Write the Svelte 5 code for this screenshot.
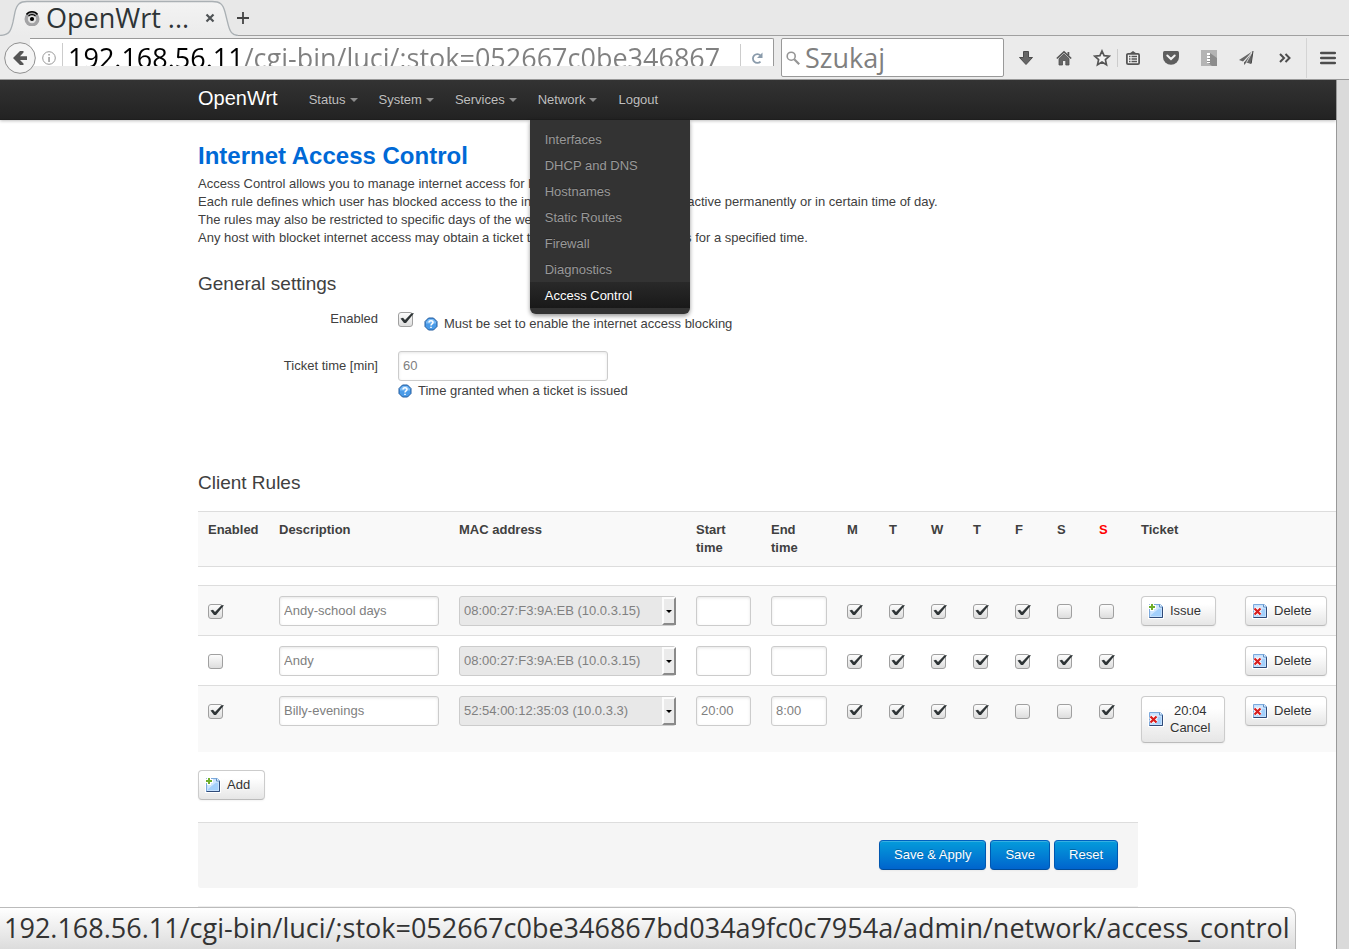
<script>
  const menu = ['Status', 'System', 'Services', 'Network'];
  const networkItems = [
    'Interfaces', 'DHCP and DNS', 'Hostnames', 'Static Routes',
    'Firewall', 'Diagnostics', 'Access Control'
  ];
  const days = [
    { name: 'Monday', short: 'M' },
    { name: 'Tuesday', short: 'T' },
    { name: 'Wednesday', short: 'W' },
    { name: 'Thursday', short: 'T' },
    { name: 'Friday', short: 'F' },
    { name: 'Saturday', short: 'S' },
    { name: 'Sunday', short: 'S' }
  ];
  const hosts = ['08:00:27:F3:9A:EB (10.0.3.15)', '52:54:00:12:35:03 (10.0.3.3)'];

  let rules = $state([
    { on: true, name: 'Andy-school days', mac: hosts[0], start: '', end: '', days: [true, true, true, true, true, false, false], ticket: 'issue' },
    { on: false, name: 'Andy', mac: hosts[0], start: '', end: '', days: [true, true, true, true, true, true, true], ticket: '' },
    { on: true, name: 'Billy-evenings', mac: hosts[1], start: '20:00', end: '8:00', days: [true, true, true, true, false, false, true], ticket: '20:04' }
  ]);
  let enabled = $state(true);
  let ticketTime = $state('60');
</script>

{#snippet pageIcon(kind)}
  <svg class="page-icon" viewBox="0 0 16 16" width="16" height="16" aria-hidden="true">
    <path d="M0 0h13l3 3v13H0z" fill="#fff" />
    <path d="M1.500 1.500H12l2.500 2v11h-13z" fill="#c4e0fd" stroke="#7ba9dc" />
    <path d="M3 3h8v3h2v7H3z" fill="#a3d0fc" />
    <path d="M3 3h8v2.500L3 12z" fill="#cfe6ff" />
    <path d="M14.500 4v10.500h-13" fill="none" stroke="#2f4a78" />
    <path d="M11.500 1.500v2.500h3" fill="#fff" stroke="#5d8ec6" />
    {#if kind === 'add'}
      <path d="M4 0v8M0 4h8" stroke="#fff" stroke-width="4" />
      <path d="M4 1v6M1 4h6" stroke="#6fae2b" stroke-width="2" />
    {:else}
      <path d="M2.500 5.500l6 6M8.500 5.500l-6 6" stroke="#fff" stroke-width="4" />
      <path d="M2.500 5.500l6 6M8.500 5.500l-6 6" stroke="#d81e1e" stroke-width="2.200" />
    {/if}
  </svg>
{/snippet}

{#snippet helpIcon()}
  <svg class="help-icon" viewBox="0 0 14 14" width="14" height="14" aria-hidden="true">
    <path d="M4.500 1h5L13 4.500v5L9.500 13h-5L1 9.500v-5z" fill="#4a9be8" stroke="#235a9c" />
    <path d="M5 2h4l3 3v1.500H2V5z" fill="#7cbcf5" />
    <path d="M5 5.500c0-2.500 4-2.500 4 0 0 1.400-2 1.300-2 3" fill="none" stroke="#fff" stroke-width="1.500" />
    <path d="M6.200 9.700h1.600v1.400H6.200z" fill="#fff" />
  </svg>
{/snippet}

<div class="browser">
  <header class="tabs">
    <div class="tab">
      <svg class="tab-shape" viewBox="0 0 238 36" width="238" height="36" aria-hidden="true">
        <defs>
          <linearGradient id="tabfill" x1="0" y1="0" x2="0" y2="1">
            <stop offset="0" stop-color="#f3f3f3" /><stop offset="1" stop-color="#ebebeb" />
          </linearGradient>
        </defs>
        <path d="M0 36V35.500C10 35 11 30 13 22L15 12C17 4 20 1.500 27 1.500H212C220 1.500 223 4 225 12L228 24C230 32 232 35 238 35.500V36z" fill="url(#tabfill)" />
        <path d="M0 35.500C10 35 11 30 13 22L15 12C17 4 20 1.500 27 1.500H212C220 1.500 223 4 225 12L228 24C230 32 232 35 238 35.500" fill="none" stroke="#aab0b4" stroke-width="1.300" />
      </svg>
      <svg class="favicon" viewBox="0 0 16 16" width="16" height="16" aria-hidden="true">
        <circle cx="8" cy="9" r="7.500" fill="#a3a3a5" />
        <circle cx="8" cy="9" r="4.200" fill="#e4e4e4" />
        <circle cx="8" cy="9" r="2.100" fill="#000" />
        <path d="M2.500 4.500C5 .8 11 .8 13.500 4.500" fill="none" stroke="#000" stroke-width="1.500" />
        <path d="M4.500 6.200C6 4 10 4 11.500 6.200" fill="none" stroke="#000" stroke-width="1.200" />
      </svg>
      <span class="tab-title">OpenWrt ...</span>
      <button class="plain tab-close" aria-label="Close tab">
        <svg viewBox="0 0 10 10" width="10" height="10"><path d="M1.500 1.500l7 7M8.500 1.500l-7 7" stroke="#4f5356" stroke-width="2.200" /></svg>
      </button>
    </div>
    <button class="plain new-tab" aria-label="New tab">
      <svg viewBox="0 0 14 14" width="14" height="14"><path d="M7 1v12M1 7h12" stroke="#444" stroke-width="1.800" /></svg>
    </button>
  </header>

  <div class="toolbar">
    <button class="plain back" aria-label="Back">
      <svg viewBox="0 0 32 32" width="32" height="32">
        <circle cx="16" cy="16" r="15.300" fill="#f4f4f4" stroke="#8f8f8f" />
        <path d="M9 16l7-7h3.500v1.500L16 14.300h7v3.600h-7l3.500 3.700V23H16z" fill="#555" />
      </svg>
    </button>
    <div class="url">
      <svg class="info" viewBox="0 0 14 14" width="14" height="14" aria-hidden="true">
        <circle cx="7" cy="7" r="6.300" fill="none" stroke="#999" />
        <path d="M6.300 3h1.500v1.500H6.300zM6.300 6h1.500v5H6.300z" fill="#999" />
      </svg>
      <input class="url-text" aria-label="Address" value="192.168.56.11/cgi-bin/luci/;stok=052667c0be346867" />
      <button class="plain reload" aria-label="Reload">
        <svg viewBox="0 0 12 12" width="12" height="12">
          <path d="M9.500 3.500A4.400 4.400 0 1 0 9.500 9.600" fill="none" stroke="#8a9bab" stroke-width="1.800" />
          <path d="M11.500.5v5.500H6z" fill="#8a9bab" />
        </svg>
      </button>
    </div>
    <div class="search">
      <svg viewBox="0 0 14 14" width="14" height="14" aria-hidden="true">
        <circle cx="5.200" cy="5.200" r="4" fill="none" stroke="#959595" stroke-width="1.600" />
        <path d="M8.200 8.200l5 5" stroke="#959595" stroke-width="2.200" />
      </svg>
      <input class="search-text" aria-label="Search" placeholder="Szukaj" />
    </div>
    <div class="tools">
      <button class="plain" aria-label="Downloads">
        <svg viewBox="0 0 16 16" width="16" height="16"><path d="M5.500 1.500h5v6h4L8 14.500 1.500 7.500h4z" fill="#666" stroke="#4c4c4c" /></svg>
      </button>
      <button class="plain" aria-label="Home">
        <svg viewBox="0 0 16 16" width="16" height="16">
          <path d="M.8 8.500L8 1.800l7.200 6.700" fill="none" stroke="#555" stroke-width="1.600" />
          <path d="M11.500 2h1.800v3.500h-1.800z" fill="#555" />
          <path d="M3 8.600l5-4.500 5 4.500V15H9.800v-4.500H6.500V15H3z" fill="#666" stroke="#4f4f4f" stroke-width=".8" />
        </svg>
      </button>
      <div class="bookmark">
        <button class="plain" aria-label="Bookmark this page">
          <svg viewBox="0 0 18 18" width="18" height="18"><path d="M9 2l2.100 4.700 5.200.5-3.900 3.400 1.100 5.100L9 13.100l-4.500 2.600 1.100-5.100-3.900-3.400 5.200-.5z" fill="#f2f2f2" stroke="#555" stroke-width="1.700" /></svg>
        </button>
        <button class="plain" aria-label="Bookmarks list">
          <svg viewBox="0 0 16 16" width="16" height="16">
            <path d="M4.500 3.500L8 1l3.500 2.500z" fill="#555" />
            <rect x="1.900" y="3.900" width="12.200" height="10.200" rx="1.200" fill="#f4f4f4" stroke="#555" stroke-width="1.800" />
            <path d="M4 6.500h1.500M4 9h1.500M4 11.500h1.500M6.500 6.500H12M6.500 9H12M6.500 11.500H12" stroke="#555" stroke-width="1.300" />
          </svg>
        </button>
      </div>
      <button class="plain" aria-label="Pocket">
        <svg viewBox="0 0 16 16" width="16" height="16">
          <path d="M1.500 1h13q1.500 0 1.500 1.500V7A8 7.800 0 0 1 0 7V2.500Q0 1 1.500 1z" fill="#5e5e5e" />
          <path d="M4.300 5.500L8 9l3.700-3.500" fill="none" stroke="#f2f2f2" stroke-width="2" stroke-linecap="round" />
        </svg>
      </button>
      <button class="plain" aria-label="Archive add-on">
        <svg viewBox="0 0 16 16" width="16" height="16">
          <path d="M0 0h16v16H0z" fill="#b4b4b4" />
          <path d="M9 3l7 5v8h-5L6 12z" fill="#8c8c8c" />
          <path d="M7.500 3v10" stroke="#fff" stroke-width="3" stroke-dasharray="2 1" />
        </svg>
      </button>
      <button class="plain send" aria-label="Send">
        <svg viewBox="0 0 16 16" width="16" height="16">
          <path d="M14 1L0 10l4 1.500z" fill="#666" />
          <path d="M14 1L5 12v3l2.500-2.500L12 14z" fill="#666" />
          <path d="M13.500 1.500L5 12M13.500 1.500L7.500 12.500" stroke="#eee" stroke-width=".8" />
          <path d="M14 1l-1.800 12.500" stroke="#444" />
        </svg>
      </button>
      <button class="plain" aria-label="More tools">
        <svg viewBox="0 0 16 16" width="16" height="16"><path d="M3 4l4 4-4 4M8.500 4l4 4-4 4" fill="none" stroke="#4d4d4d" stroke-width="2" /></svg>
      </button>
      <div class="main-menu">
        <button class="plain" aria-label="Menu">
          <svg viewBox="0 0 16 16" width="16" height="16"><path d="M1.200 3h13.600M1.200 8h13.600M1.200 13h13.600" stroke="#4d4d4d" stroke-width="2.600" stroke-linecap="round" /></svg>
        </button>
      </div>
    </div>
  </div>

  <div class="viewport">
    <div class="document">
      <nav class="topbar">
        <div class="container nav">
          <a class="brand" href="#home">OpenWrt</a>
          <ul class="menu">
            {#each menu as item}
              <li>
                <a href="#{item}">{item}<span class="caret"></span></a>
                {#if item === 'Network'}
                  <ul class="dropdown">
                    {#each networkItems as sub}
                      <li><a href="#{sub}" class:active={sub === 'Access Control'}>{sub}</a></li>
                    {/each}
                  </ul>
                {/if}
              </li>
            {/each}
            <li><a href="#logout">Logout</a></li>
          </ul>
        </div>
      </nav>

      <main class="container">
        <h1>Internet Access Control</h1>
        <p>
          Access Control allows you to manage internet access for local hosts.<br />
          Each rule defines which user has blocked access to the internet. Such a rule may be active permanently or in certain time of day.<br />
          The rules may also be restricted to specific days of the week.<br />
          Any host with blocket internet access may obtain a ticket to unlock the internet access for a specified time.
        </p>

        <section>
          <h2>General settings</h2>
          <div class="field">
            <label for="enabled">Enabled</label>
            <div class="inline">
              <input id="enabled" type="checkbox" bind:checked={enabled} />
              <span class="help shifted">{@render helpIcon()}Must be set to enable the internet access blocking</span>
            </div>
          </div>
          <div class="field ticket">
            <label for="ticket">Ticket time [min]</label>
            <div>
              <input id="ticket" class="box" type="text" bind:value={ticketTime} />
              <span class="help">{@render helpIcon()}Time granted when a ticket is issued</span>
            </div>
          </div>
        </section>

        <section class="rules">
          <h2>Client Rules</h2>
          <table>
            <colgroup>
              <col class="c-on" /><col class="c-name" /><col class="c-mac" /><col class="c-start" /><col class="c-end" />
              {#each days as _}<col class="c-day" />{/each}
              <col class="c-ticket" /><col class="c-delete" />
            </colgroup>
            <thead>
              <tr>
                <th>Enabled</th>
                <th>Description</th>
                <th>MAC address</th>
                <th>Start<br />time</th>
                <th>End<br />time</th>
                {#each days as day}
                  <th class:sunday={day.name === 'Sunday'}>{day.short}</th>
                {/each}
                <th>Ticket</th>
                <th></th>
              </tr>
            </thead>
            <tbody>
              <tr class="spacer"><td colspan="14"></td></tr>
              {#each rules as rule}
                <tr class="rule">
                  <td><input type="checkbox" bind:checked={rule.on} aria-label="Enabled" /></td>
                  <td><input class="box" type="text" bind:value={rule.name} aria-label="Description" /></td>
                  <td>
                    <div class="select">
                      <select bind:value={rule.mac} aria-label="MAC address">
                        {#each hosts as host}<option value={host}>{host}</option>{/each}
                      </select>
                      <span class="arrow" aria-hidden="true"></span>
                    </div>
                  </td>
                  <td><input class="box" type="text" bind:value={rule.start} aria-label="Start time" /></td>
                  <td><input class="box" type="text" bind:value={rule.end} aria-label="End time" /></td>
                  {#each days as day, i}
                    <td><input type="checkbox" bind:checked={rule.days[i]} aria-label={day.name} /></td>
                  {/each}
                  <td>
                    {#if rule.ticket === 'issue'}
                      <button class="btn">{@render pageIcon('add')}<span>Issue</span></button>
                    {:else if rule.ticket}
                      <button class="btn">{@render pageIcon('remove')}<span>{rule.ticket}<br />Cancel</span></button>
                    {/if}
                  </td>
                  <td><button class="btn">{@render pageIcon('remove')}<span>Delete</span></button></td>
                </tr>
              {/each}
            </tbody>
          </table>
          <button class="btn">{@render pageIcon('add')}<span>Add</span></button>
        </section>

        <div class="actions">
          <button class="primary">Save &amp; Apply</button>
          <button class="primary">Save</button>
          <button class="primary">Reset</button>
        </div>
        <footer></footer>
      </main>
    </div>
    <div class="scrollbar"></div>
  </div>
  <div class="status">192.168.56.11/cgi-bin/luci/;stok=052667c0be346867bd034a9fc0c7954a/admin/network/access_control</div>
</div>

<style>
  :global(body) { margin: 0; }
  * { box-sizing: border-box; }
  .browser {
    position: relative;
    height: 100vh;
    display: flex;
    flex-direction: column;
    overflow: hidden;
    background: #fff;
    color: #404040;
    font: 13px/18px "Liberation Sans", Arial, sans-serif;
  }
  button, input, select { font: inherit; margin: 0; }
  .plain { border: 0; padding: 0; background: none; display: flex; align-items: center; justify-content: center; }
  svg { display: block; flex: none; }

  .tabs { display: flex; height: 36px; background: #e8e8e8; border-bottom: 1px solid #a0a0a0; flex: none; }
  .tab { position: relative; display: flex; align-items: center; width: 236px; height: 36px; padding: 0 20px 0 24px; }
  .tab-shape { position: absolute; left: 0; top: 0; }
  .favicon { position: relative; margin-right: 6px; }
  .tab-title { position: relative; flex: 1; font: 27px/38px "Open Sans", "Noto Sans", sans-serif; color: #2e3436; white-space: nowrap; }
  .tab-close { position: relative; width: 12px; height: 12px; }
  .new-tab { width: 14px; height: 36px; }

  .toolbar { display: flex; flex: none; height: 44px; padding: 2px 9px 0 4px; background: #ebebeb; border-bottom: 1px solid #999; }
  .back { position: relative; z-index: 1; width: 32px; height: 40px; }
  .url {
    flex: 1; display: flex; align-items: flex-start; height: 28px; margin: 0 7px 0 -6px; overflow: hidden;
    background: #fff; border: 1px solid #999; border-width: 1px 1px 0 0; border-radius: 0 2px 0 0;
  }
  .info { margin: 12px 6px 0 12px; }
  .url-text {
    flex: 1; min-width: 0; height: 30px; margin-top: 4px; padding: 0 0 0 5px; border: 0; border-left: 1px solid #ccc; outline: 0;
    font: 27px/30px "Open Sans", "Noto Sans", sans-serif; color: transparent;
    background: linear-gradient(90deg, #000 181px, #808080 181px); background-clip: text; -webkit-background-clip: text;
  }
  .reload { width: 33px; height: 38px; border-left: 1px solid #ccc; margin-top: 5px; align-items: flex-start; padding-top: 8px; }
  .search { display: flex; align-items: center; width: 223px; height: 39px; padding-left: 4px; background: #fff; border: 1px solid #999; border-radius: 2px; }
  .search-text { width: 100%; min-width: 0; padding: 0 0 0 5px; height: 37px; border: 0; outline: 0; background: none; font: 27px/37px "Open Sans", "Noto Sans", sans-serif; }
  .search-text::placeholder { color: #808080; opacity: 1; }
  .tools { display: flex; align-items: center; gap: 14px; height: 40px; padding-left: 10px; }
  .tools .plain { width: 24px; height: 24px; }
  .bookmark { display: flex; gap: 7px; background: linear-gradient(#ccc, #ccc) 27px 3px / 1px 18px no-repeat; }
  .main-menu { height: 40px; margin-left: -5px; padding-left: 9px; display: flex; align-items: center; border-left: 1px solid #d4d4d4; }

  .viewport { flex: 1; min-height: 0; display: flex; }
  .document { flex: 1; min-width: 0; overflow: hidden; }
  .scrollbar { width: 13px; background: #dadada; border-left: 1px solid #999; }
  .container { max-width: 940px; margin: 0 auto; }

  .topbar { position: relative; z-index: 2; background: linear-gradient(#333, #222); box-shadow: 0 1px 3px rgba(0, 0, 0, .25), inset 0 -1px 0 rgba(0, 0, 0, .1); }
  .nav { display: flex; height: 40px; }
  .nav a { color: #bfbfbf; text-decoration: none; text-shadow: 0 -1px 0 rgba(0, 0, 0, .25); }
  .nav .brand { padding: 8px 21px 0 0; font-size: 20px; line-height: 20px; color: #fff; }
  .menu, .dropdown { list-style: none; margin: 0; padding: 0; }
  .menu { display: flex; }
  .menu > li { position: relative; }
  .menu > li > a { display: flex; align-items: center; padding: 0 11px 0 10px; height: 40px; }
  .caret { margin-left: 4px; border: 4px solid transparent; border-top-color: #8c8c8c; border-bottom: 0; }
  .dropdown { position: absolute; left: 2px; top: 40px; width: 160px; padding: 6px 0; background: #333; border-radius: 0 0 6px 6px; box-shadow: 0 2px 4px rgba(0, 0, 0, .4); }
  .dropdown a { display: block; padding: 5px 15px 3px; color: #999; }
  .dropdown a.active { color: #fff; background: linear-gradient(#292929, #191919); }

  h1 { margin: 0; padding: 18px 0 1px; font-size: 24px; line-height: 36px; color: #0069d6; }
  p { margin: 0; white-space: nowrap; }
  h2 { margin: 0; font-size: 19px; line-height: 30px; font-weight: 400; }
  section { padding-top: 22px; }
  .field { display: grid; grid-template-columns: 180px 1fr; column-gap: 20px; padding-top: 11px; }
  .field label { text-align: right; }
  .field.ticket { padding-top: 18px; }
  .field.ticket label { padding-top: 6px; }
  .field.ticket .box { display: block; width: 210px; }
  .inline { display: flex; align-items: flex-start; }
  .help { display: flex; align-items: center; gap: 6px; padding-top: 1px; }
  .help.shifted { padding: 5px 0 0 10px; }

  input[type="checkbox"] {
    appearance: none; display: block; width: 16px; height: 16px; flex: none;
    background: url("data:image/svg+xml,%3Csvg xmlns='http://www.w3.org/2000/svg' width='16' height='16'%3E%3Cdefs%3E%3ClinearGradient id='g' x2='0' y2='1'%3E%3Cstop stop-color='%23fdfdfd'/%3E%3Cstop offset='1' stop-color='%23dcdcdc'/%3E%3C/linearGradient%3E%3C/defs%3E%3Crect x='.5' y='.5' width='14' height='14' rx='2.500' fill='url(%23g)' stroke='%23a0a0a0'/%3E%3C/svg%3E");
  }
  input[type="checkbox"]:checked {
    background: url("data:image/svg+xml,%3Csvg xmlns='http://www.w3.org/2000/svg' width='16' height='16'%3E%3Cdefs%3E%3ClinearGradient id='g' x2='0' y2='1'%3E%3Cstop stop-color='%23fdfdfd'/%3E%3Cstop offset='1' stop-color='%23dcdcdc'/%3E%3C/linearGradient%3E%3C/defs%3E%3Crect x='.5' y='.5' width='14' height='14' rx='2.500' fill='url(%23g)' stroke='%23a0a0a0'/%3E%3Cpath d='M2.500 6.500L5 5.800L7 8L13.500 1.300H16L8 11H6z' fill='%232e3436'/%3E%3C/svg%3E");
  }
  .inline input { margin-top: 2px; }
  .box {
    width: 100%; height: 30px; padding: 3px 4px 5px; color: #808080; background: #fff; border: 1px solid #ccc; border-radius: 3px;
    box-shadow: inset 0 1px 3px rgba(0, 0, 0, .1);
  }

  .rules { padding-top: 68px; }
  table { width: 1138px; margin: 13px 0 18px; table-layout: fixed; border-collapse: separate; border-spacing: 0; }
  .c-on { width: 71px; }
  .c-name { width: 180px; }
  .c-mac { width: 237px; }
  .c-start { width: 75px; }
  .c-end { width: 76px; }
  .c-day { width: 42px; }
  .c-ticket { width: 104px; }
  .c-delete { width: 101px; }
  th, td { padding: 10px 10px 9px; border-top: 1px solid #ddd; text-align: left; vertical-align: top; }
  th { padding-top: 9px; background: #f9f9f9; font-weight: 700; }
  .sunday { color: #f00; }
  .spacer td { height: 19px; padding: 0; }
  .rule:nth-child(even) td { background: #f9f9f9; }
  .rule input[type="checkbox"] { margin-top: 8px; }

  .select { position: relative; }
  select { display: block; appearance: none; width: 100%; height: 30px; padding: 4px; color: #808080; background: #e8e8e8; border: 1px solid #ccc; border-radius: 3px; }
  .arrow { position: absolute; right: 0; top: 1px; width: 14px; height: 28px; pointer-events: none; background: #ebebeb; border: 2px solid; border-color: #fcfcfc #8a8a8a #8a8a8a #fcfcfc; }
  .arrow::after { content: ""; position: absolute; left: 2px; top: 11px; border: 3px solid transparent; border-top-color: #000; border-bottom: 0; }

  .btn {
    display: flex; align-items: center; gap: 6px; min-height: 30px; padding: 5px 14px 6px 6px; color: #333; line-height: 17px;
    background: linear-gradient(#fff, #fff 25%, #e6e6e6); border: 1px solid #ccc; border-bottom-color: #bbb; border-radius: 4px;
    box-shadow: 0 1px 2px rgba(0, 0, 0, .05); text-shadow: 0 1px 1px rgba(255, 255, 255, .75);
  }
  .actions { display: flex; justify-content: flex-end; gap: 4px; margin-top: 22px; padding: 17px 20px 18px; background: #f5f5f5; border-top: 1px solid #ddd; border-radius: 0 0 3px 3px; }
  .primary {
    height: 30px; padding: 0 14px; color: #fff; background: linear-gradient(#049cdb, #0064cd);
    border: 1px solid; border-color: #0060c0 #0057b0 #004c9a; border-radius: 4px;
    box-shadow: inset 0 1px 0 rgba(255, 255, 255, .2), 0 1px 2px rgba(0, 0, 0, .05); text-shadow: 0 -1px 0 rgba(0, 0, 0, .25);
  }
  footer { margin-top: 18px; border-top: 1px solid #eee; }

  .status {
    position: absolute; left: 0; bottom: 0; z-index: 3; height: 42px; padding: 0 5px 0 4px; white-space: nowrap;
    font: 27px/40px "Open Sans", "Noto Sans", sans-serif; color: #333; background: linear-gradient(#fff, #dcdcdc);
    border: 1px solid #bbb; border-width: 1px 1px 0 0; border-radius: 0 8px 0 0;
  }
</style>
